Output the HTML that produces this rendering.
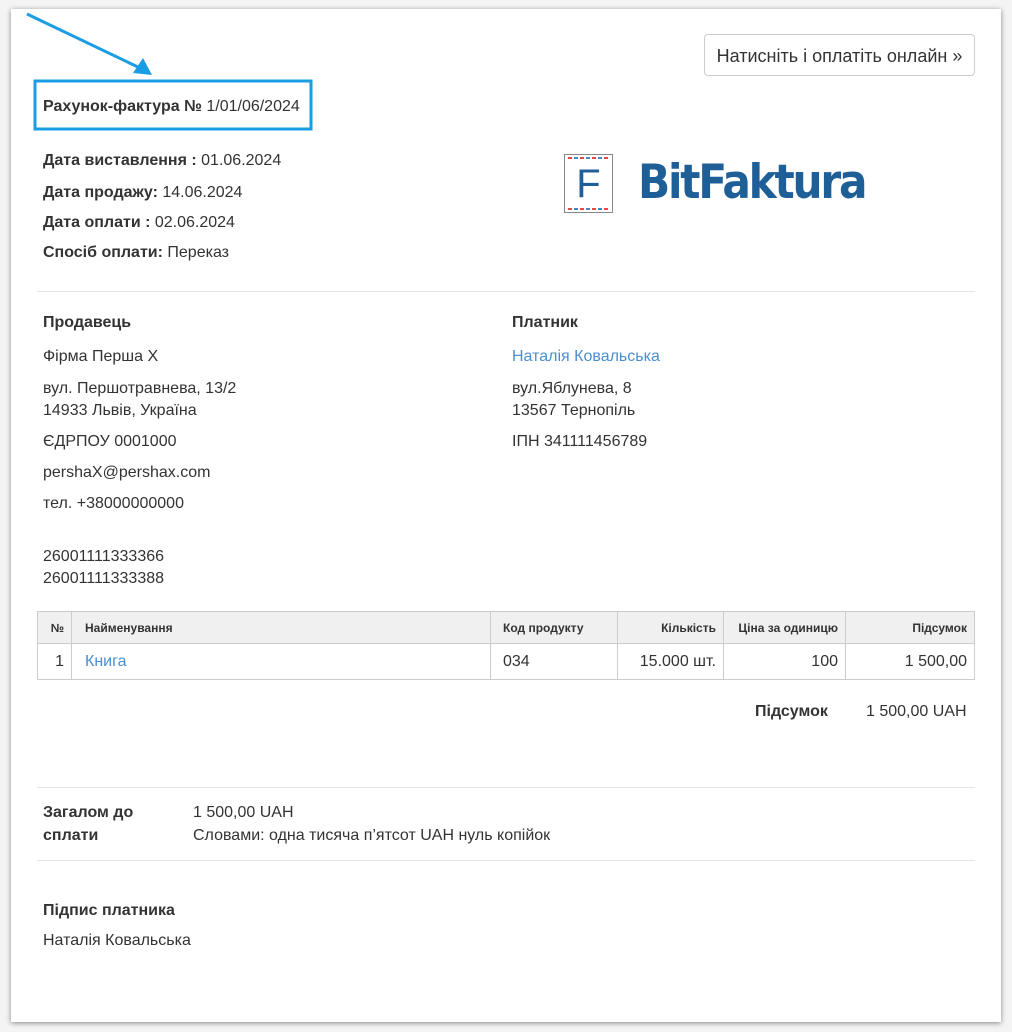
<!DOCTYPE html>
<html><head><meta charset="utf-8"><style>
body{margin:0;width:1012px;height:1032px;background:#f4f4f4;font-family:"Liberation Sans",sans-serif;color:#333;position:relative;overflow:hidden}
.card{position:absolute;left:11px;top:9px;width:990px;height:1013px;background:#fff;box-shadow:0 1px 5px rgba(0,0,0,.45)}
.a{position:absolute;font-size:16px;white-space:nowrap;line-height:22px}
b{font-weight:bold}
.hr{position:absolute;left:37px;width:938px;height:1px;background:#e5e5e5}
.link{color:#4a8fd0}
table{position:absolute;left:37px;top:611px;width:938px;border-collapse:collapse;font-size:16px}
td,th{border:1px solid #ccc;padding:0 7px}
th{background:#f0f0f0;font-size:12px;height:31px;text-align:left}
td{height:35px}
.r{text-align:right}
</style></head><body>
<div class="card"></div>
<svg style="position:absolute;left:0;top:0" width="320" height="140">
<line x1="27" y1="14" x2="140" y2="68" stroke="#1a9de3" stroke-width="3"/>
<polygon points="152,75 133,73 143,58" fill="#1a9de3"/>
<rect x="35" y="81" width="276" height="48" fill="none" stroke="#1a9de3" stroke-width="3"/>
</svg>
<div class="a" style="left:43px;top:96px"><b>Рахунок-фактура №</b> 1/01/06/2024</div>
<div style="position:absolute;left:704px;top:34px;width:269px;height:40px;border:1px solid #ccc;border-radius:4px;font-size:18px;line-height:42px;text-align:center;color:#333">Натисніть і оплатіть онлайн »</div>
<div class="a" style="left:43px;top:150px"><b>Дата виставлення :</b> 01.06.2024</div>
<div class="a" style="left:43px;top:182px"><b>Дата продажу:</b> 14.06.2024</div>
<div class="a" style="left:43px;top:212px"><b>Дата оплати :</b> 02.06.2024</div>
<div class="a" style="left:43px;top:242px"><b>Спосіб оплати:</b> Переказ</div>
<div style="position:absolute;left:564px;top:154px;width:47px;height:57px;border:1px solid #888;background:#fff">
<div style="position:absolute;left:3px;right:3px;top:2px;height:2px;background:repeating-linear-gradient(90deg,#e44 0 4px,#fff 4px 6px,#48c 6px 10px,#fff 10px 12px)"></div>
<div style="position:absolute;left:3px;right:3px;bottom:2px;height:2px;background:repeating-linear-gradient(90deg,#e44 0 4px,#fff 4px 6px,#48c 6px 10px,#fff 10px 12px)"></div>
<div style="position:absolute;left:0;right:0;top:5px;text-align:center;font-size:40px;line-height:48px;color:#1f5f97">F</div>
</div>
<div class="a" style="left:638px;top:154px;font-size:47px;line-height:58px;font-family:'DejaVu Sans',sans-serif;font-weight:bold;color:#1f5f97;letter-spacing:-2.5px;transform:scaleX(0.9);transform-origin:left">BitFaktura</div>
<div class="hr" style="top:291px"></div>
<div class="a" style="left:43px;top:312px"><b>Продавець</b></div>
<div class="a" style="left:43px;top:346px">Фірма Перша Х</div>
<div class="a" style="left:43px;top:378px;line-height:22px">вул. Першотравнева, 13/2<br>14933 Львів, Україна</div>
<div class="a" style="left:43px;top:431px">ЄДРПОУ 0001000</div>
<div class="a" style="left:43px;top:462px">pershaX@pershax.com</div>
<div class="a" style="left:43px;top:493px">тел. +38000000000</div>
<div class="a" style="left:43px;top:546px;line-height:22px">26001111333366<br>26001111333388</div>
<div class="a" style="left:512px;top:312px"><b>Платник</b></div>
<div class="a link" style="left:512px;top:346px">Наталія Ковальська</div>
<div class="a" style="left:512px;top:378px;line-height:22px">вул.Яблунева, 8<br>13567 Тернопіль</div>
<div class="a" style="left:512px;top:431px">ІПН 341111456789</div>
<table>
<tr><th style="width:19px" class="r">№</th><th style="padding-left:13px;width:398px">Найменування</th><th style="padding-left:12px;width:107px">Код продукту</th><th class="r" style="width:91px">Кількість</th><th class="r" style="width:107px">Ціна за одиницю</th><th class="r">Підсумок</th></tr>
<tr><td class="r">1</td><td class="link" style="padding-left:13px">Книга</td><td style="padding-left:12px">034</td><td class="r">15.000 шт.</td><td class="r">100</td><td class="r">1 500,00</td></tr>
</table>
<div class="a" style="left:755px;top:701px"><b>Підсумок</b></div>
<div class="a" style="left:866px;top:701px">1 500,00 UAH</div>
<div class="hr" style="top:787px"></div>
<div class="a" style="left:43px;top:801px;line-height:23px"><b>Загалом до<br>сплати</b></div>
<div class="a" style="left:193px;top:801px;line-height:23px">1 500,00 UAH<br>Словами: одна тисяча п’ятсот UAH нуль копійок</div>
<div class="hr" style="top:860px"></div>
<div class="a" style="left:43px;top:900px"><b>Підпис платника</b></div>
<div class="a" style="left:43px;top:930px">Наталія Ковальська</div>
</body></html>
